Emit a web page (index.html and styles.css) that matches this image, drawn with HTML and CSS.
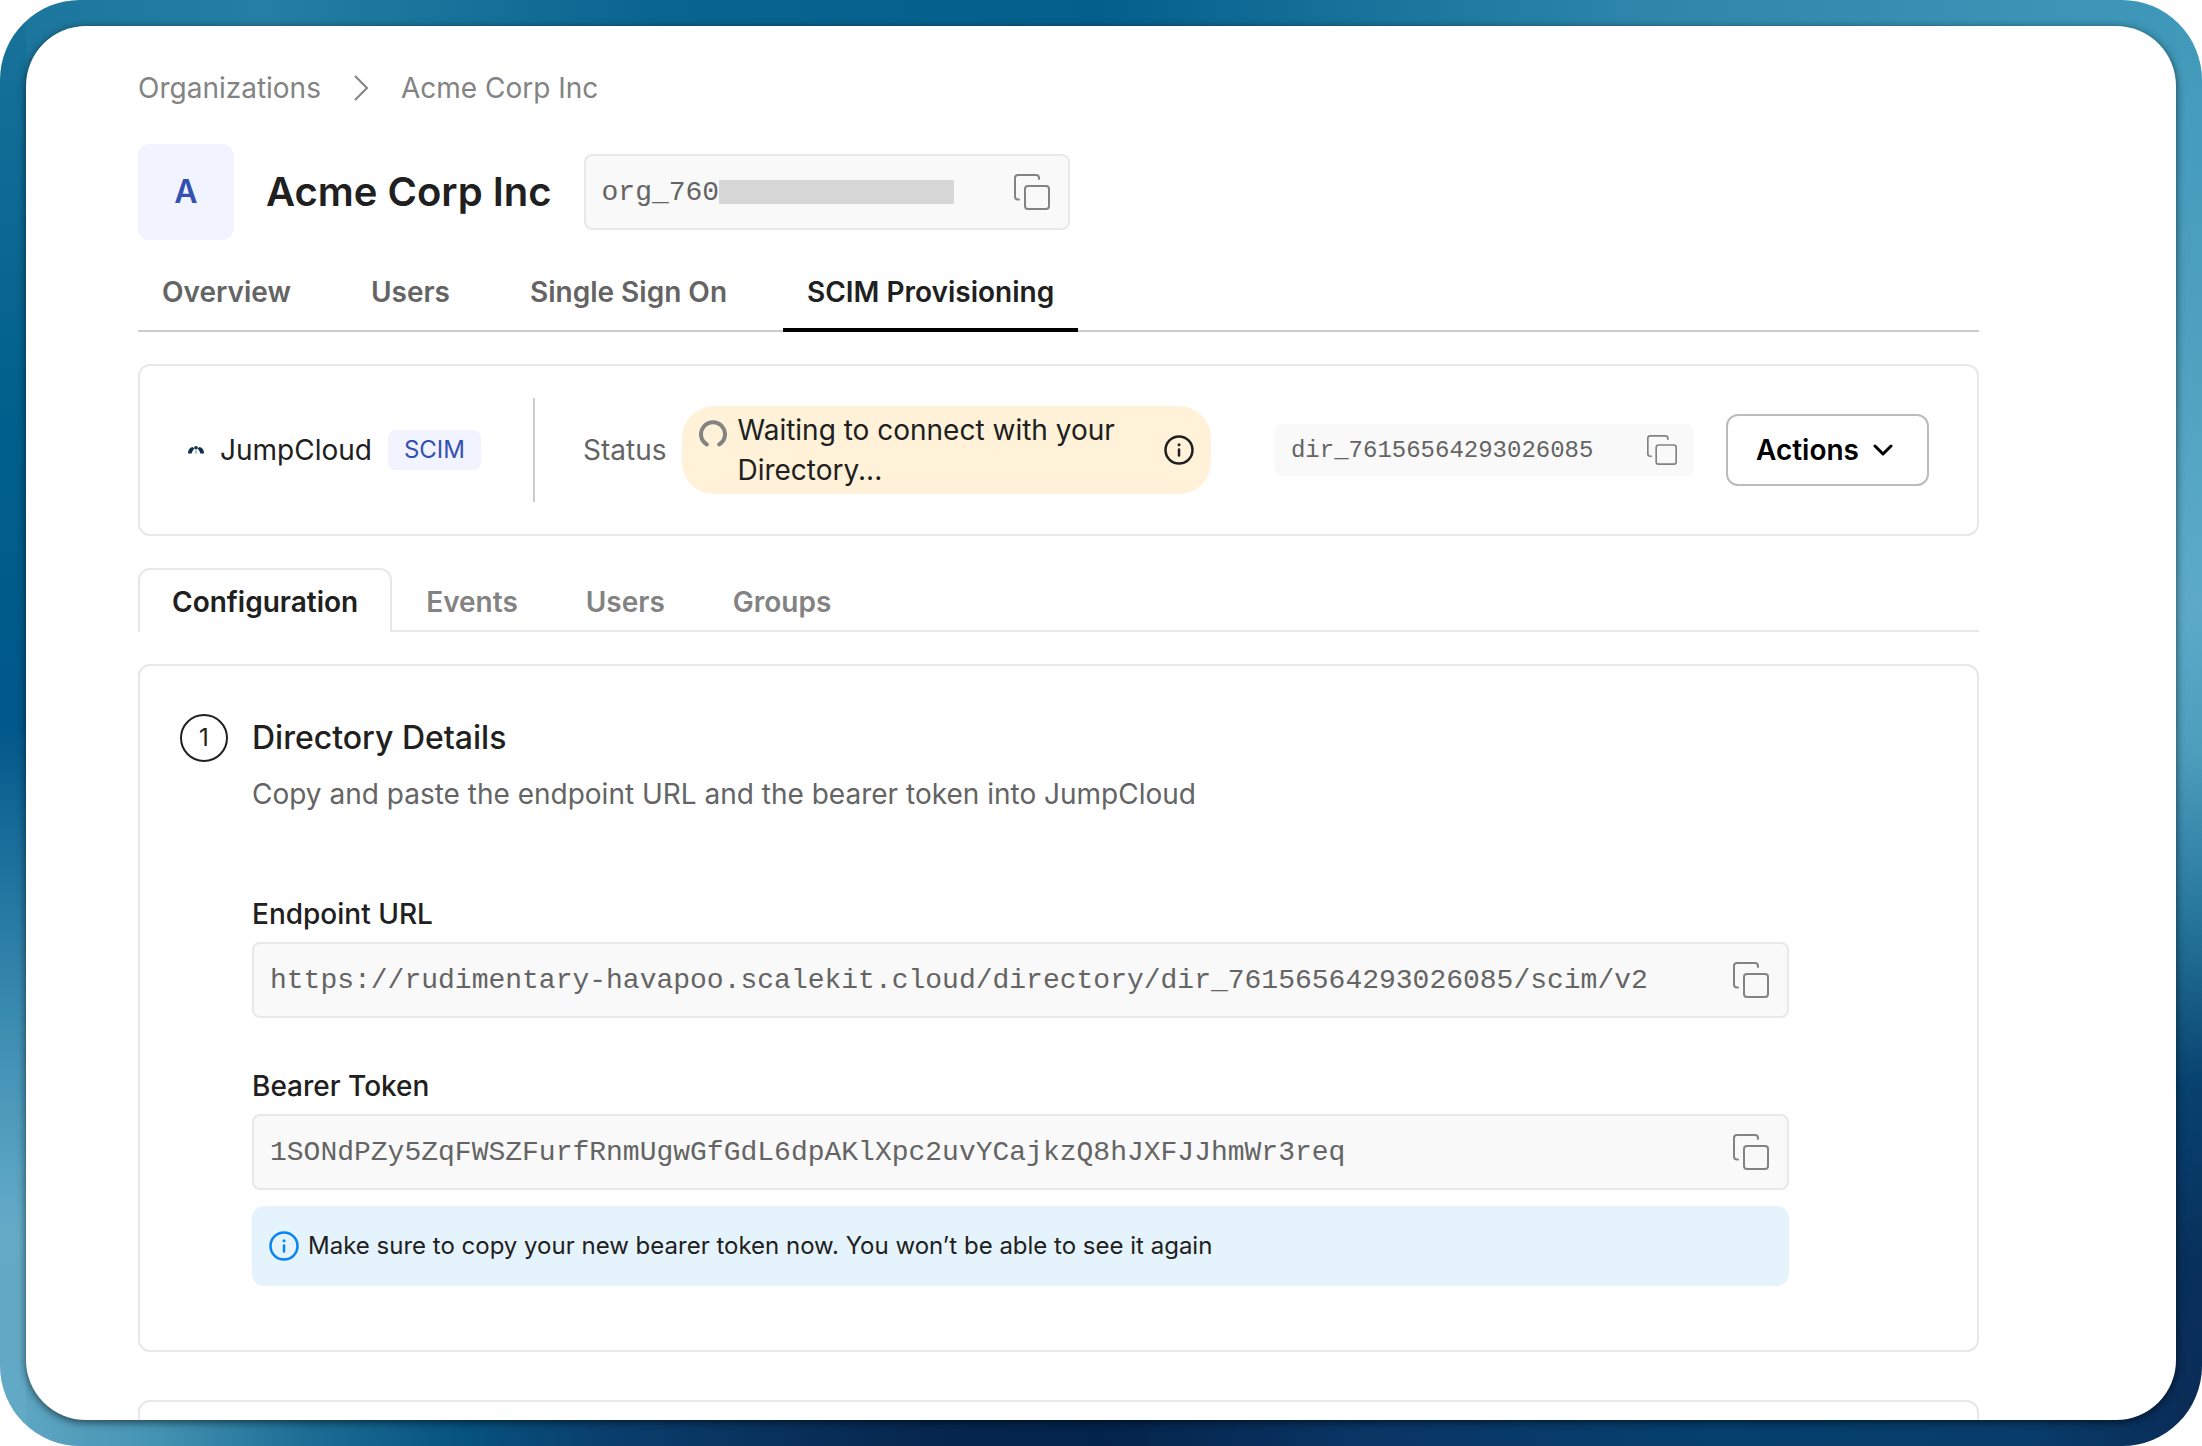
FILE: index.html
```html
<!DOCTYPE html>
<html lang="en">
<head>
<meta charset="utf-8">
<title>Acme Corp Inc – SCIM Provisioning</title>
<link rel="stylesheet" href="styles.css">
</head>
<body>
<svg class="sprite" aria-hidden="true">
  <symbol id="copy" viewBox="0 0 36 36">
    <g fill="none" stroke="currentColor" stroke-width="2" stroke-linecap="round">
      <rect x="11" y="12" width="24" height="23" rx="3"/>
      <path d="M5 25.500H4a3 3 0 0 1-3-3V4a3 3 0 0 1 3-3h18a3 3 0 0 1 3 3v1"/>
    </g>
  </symbol>
  <symbol id="info" viewBox="0 0 30 30">
    <circle cx="15" cy="15" r="13.500" fill="none" stroke="currentColor" stroke-width="2.500"/>
    <path d="M15 14.500v6" stroke="currentColor" stroke-width="2.500" stroke-linecap="round"/>
    <circle cx="15" cy="9.800" r="1.500" fill="currentColor"/>
  </symbol>
</svg>
<div class="backdrop">
  <main class="panel">
    <nav class="breadcrumb" aria-label="Breadcrumb">
      <a href="#">Organizations</a>
      <svg class="crumb-sep" viewBox="0 0 16 28" aria-hidden="true"><path d="M2 2l12 12L2 26" fill="none" stroke="currentColor" stroke-width="2"/></svg>
      <a href="#">Acme Corp Inc</a>
    </nav>

    <header class="org">
      <div class="avatar">A</div>
      <h1>Acme Corp Inc</h1>
      <div class="copy-field org-id">
        <code>org_760</code><span class="redacted"></span>
        <button class="icon-btn" aria-label="Copy organization ID"><svg><use href="#copy"/></svg></button>
      </div>
    </header>

    <nav class="tabs" aria-label="Organization">
      <a href="#">Overview</a>
      <a href="#">Users</a>
      <a href="#">Single Sign On</a>
      <a href="#" class="active" aria-current="page">SCIM Provisioning</a>
    </nav>

    <section class="card connection">
      <div class="provider">
        <svg class="logo" viewBox="0 0 16 8" aria-hidden="true">
          <g fill="#0f2f4f">
            <circle cx="8" cy="1.800" r="1.800"/>
            <path d="M7 7.500V4.500h.700v3zM8.400 7.500V4.500h.700v3z" opacity=".5"/>
            <path d="M0 7.500C0 4 1.500 1.500 4.500 1L6.400 2.500 4.600 5 3.600 7.500zM16 7.500C16 4 14.500 1.500 11.500 1L9.600 2.500 11.400 5l1 2.500z"/>
          </g>
        </svg>
        <span>JumpCloud</span>
        <span class="badge">SCIM</span>
      </div>
      <div class="status">
        <span>Status</span>
        <div class="pill">
          <svg class="spinner" viewBox="0 0 28 28" aria-hidden="true"><path d="M7.800 24.500A12 12 0 1 1 20.200 24.500" fill="none" stroke="currentColor" stroke-width="4" stroke-linecap="round"/></svg>
          <p>Waiting to connect with your Directory...</p>
          <svg class="info"><use href="#info"/></svg>
        </div>
      </div>
      <div class="copy-field small">
        <code>dir_76156564293026085</code>
        <button class="icon-btn" aria-label="Copy directory ID"><svg><use href="#copy"/></svg></button>
      </div>
      <button class="actions">Actions
        <svg viewBox="0 0 20 12" aria-hidden="true"><path d="M2 2l8 8 8-8" fill="none" stroke="currentColor" stroke-width="3" stroke-linecap="round" stroke-linejoin="round"/></svg>
      </button>
    </section>

    <nav class="subtabs" aria-label="Directory">
      <a href="#" class="active" aria-current="page">Configuration</a>
      <a href="#">Events</a>
      <a href="#">Users</a>
      <a href="#">Groups</a>
    </nav>

    <section class="card step">
      <div class="step-number">1</div>
      <div class="step-body">
        <h2>Directory Details</h2>
        <p class="lead">Copy and paste the endpoint URL and the bearer token into JumpCloud</p>
        <label for="endpoint">Endpoint URL</label>
        <div class="copy-field">
          <input id="endpoint" type="text" readonly value="https://rudimentary-havapoo.scalekit.cloud/directory/dir_76156564293026085/scim/v2">
          <button class="icon-btn" aria-label="Copy endpoint URL"><svg><use href="#copy"/></svg></button>
        </div>
        <label for="token">Bearer Token</label>
        <div class="copy-field">
          <input id="token" type="text" readonly value="1SONdPZy5ZqFWSZFurfRnmUgwGfGdL6dpAKlXpc2uvYCajkzQ8hJXFJJhmWr3req">
          <button class="icon-btn" aria-label="Copy bearer token"><svg><use href="#copy"/></svg></button>
        </div>
        <div class="notice">
          <svg class="info"><use href="#info"/></svg>
          <span>Make sure to copy your new bearer token now. You won’t be able to see it again</span>
        </div>
      </div>
    </section>

    <section class="card next-step"></section>
  </main>
</div>
</body>
</html>
```
FILE: styles.css
```css
* { box-sizing: border-box; }
body, h1, h2, p { margin: 0; }
body {
  background: #fff;
  color: #202020;
  font: 400 28px/40px Inter, sans-serif;
}
a { color: inherit; text-decoration: none; }
svg { display: block; flex: none; }
button, input { font: inherit; color: inherit; }
.sprite { position: absolute; width: 0; height: 0; }

.backdrop {
  height: 100vh;
  padding: 26px;
  border-radius: 80px;
  overflow: hidden;
  background:
    linear-gradient(#19739b, #005f8c 30%, #00588a 50%, #3a8bb0 70%, #64abc8 85%, #62a9c6) left / 26px 100% no-repeat,
    linear-gradient(#4099ba, #4c9fbf 20%, #5caac8 42%, #4d9dbd 52%, #28789d 63%, #07426f 75%, #08305c 87%, #0a2b56) right / 26px 100% no-repeat,
    linear-gradient(90deg, #1b759d, #257ea3 12%, #0a6490 30%, #045f8c 50%, #2e87ab 75%, #4099ba) top / 100% 50% no-repeat,
    linear-gradient(90deg, #62a9c6, #4593b3 7%, #1b6d95 14%, #07527f 21%, #0a3d6c 28%, #06264e 42%, #03234a 50%, #0a3565 62%, #05406e 78%, #083c6a 92%, #0a2b56) bottom / 100% 50% no-repeat;
}
.panel {
  display: flex;
  flex-direction: column;
  height: 100%;
  padding: 42px 197px 0 112px;
  overflow: hidden;
  border-radius: 60px;
  background: #fff;
  box-shadow: 0 2px 8px rgba(0, 0, 0, .6);
}
.panel > * { flex: none; }

.breadcrumb {
  display: flex;
  align-items: center;
  gap: 32px;
  color: #838383;
}
.crumb-sep { width: 16px; height: 28px; }

.org {
  display: flex;
  align-items: center;
  gap: 32px;
  margin-top: 36px;
}
.avatar {
  width: 96px;
  border-radius: 12px;
  background: #f1f3ff;
  color: #3451b2;
  font-size: 32px;
  font-weight: 600;
  line-height: 96px;
  text-align: center;
}
h1 { font-size: 40px; font-weight: 600; line-height: 48px; }

.copy-field {
  display: flex;
  align-items: center;
  height: 76px;
  padding: 0 18px 0 16px;
  border: 2px solid #e8e8e8;
  border-radius: 8px;
  background: #f9f9f9;
  color: #646464;
}
.copy-field code, .copy-field input {
  padding: 2px 0 0;
  font-family: "Liberation Mono", monospace;
}
.copy-field input {
  flex: 1;
  min-width: 0;
  height: 40px;
  border: 0;
  background: none;
  outline: none;
}
.icon-btn {
  margin-left: auto;
  padding: 0;
  border: 0;
  background: none;
  color: #838383;
}
.icon-btn svg { width: 36px; height: 36px; }
.org-id { width: 486px; }
.redacted { width: 235px; height: 24px; background: #d7d7d7; }

.tabs {
  display: flex;
  gap: 32px;
  margin-top: 32px;
  box-shadow: inset 0 -2px #ccc;
  color: #646464;
  font-weight: 600;
}
.tabs a { padding: 0 24px 16px; border-bottom: 4px solid transparent; }
.tabs .active { border-color: #000; color: #202020; }

.card { border: 2px solid #e8e8e8; border-radius: 12px; }

.connection {
  display: flex;
  align-items: center;
  margin-top: 32px;
  padding: 32px 48px;
}
.provider {
  display: flex;
  align-items: center;
  height: 104px;
  padding-right: 52px;
  border-right: 2px solid #ccc;
}
.logo { width: 16px; height: 8px; margin-right: 16px; }
.badge {
  margin-left: 16px;
  padding: 0 16px;
  border-radius: 8px;
  background: #f1f3ff;
  color: #3451b2;
  font-size: 24px;
}
.status {
  display: flex;
  flex: 1;
  align-items: center;
  gap: 16px;
  margin: 0 64px 0 48px;
  color: #646464;
}
.pill {
  display: flex;
  flex: 1;
  align-items: center;
  gap: 10px;
  padding: 4px 17px;
  border-radius: 32px;
  background: #fff2d9;
  color: #202020;
}
.pill p { flex: 1; padding-right: 16px; }
.spinner { align-self: flex-start; width: 28px; height: 28px; margin-top: 10px; color: #838383; }
.info { width: 30px; height: 30px; }
.small {
  width: 419px;
  height: 52px;
  padding: 0 17px 0 16px;
  border: 0;
  font-size: 24px;
}
.small .icon-btn svg { width: 30px; height: 30px; }
.actions {
  display: flex;
  align-items: center;
  gap: 14px;
  height: 72px;
  margin-left: 32px;
  padding: 0 34px 0 28px;
  border: 2px solid #bbb;
  border-radius: 12px;
  background: #fff;
  color: #000;
  font-weight: 600;
}
.actions svg { width: 20px; height: 12px; }

.subtabs {
  display: flex;
  margin-top: 32px;
  color: #838383;
  font-weight: 600;
}
.subtabs::after { content: ""; flex: 1; border-bottom: 2px solid #e8e8e8; }
.subtabs a {
  padding: 14px 34px 8px;
  border-bottom: 2px solid #e8e8e8;
}
.subtabs .active {
  padding: 12px 32px 10px;
  border: 2px solid #e8e8e8;
  border-bottom: 0;
  border-radius: 12px 12px 0 0;
  color: #202020;
}

.step {
  display: flex;
  gap: 24px;
  margin-top: 32px;
  padding: 48px 188px 64px 40px;
}
.step-number {
  flex: none;
  width: 48px;
  height: 48px;
  border: 2px solid #202020;
  border-radius: 50%;
  font-size: 24px;
  line-height: 44px;
  text-align: center;
}
.step-body { flex: 1; min-width: 0; }
h2 { font-size: 32px; font-weight: 500; line-height: 48px; }
.lead { margin: 12px 0 80px; color: #646464; }
label { display: block; font-weight: 500; }
.step .copy-field { margin: 8px 0 48px; }
.step .copy-field:has(+ .notice) { margin-bottom: 16px; }
.notice {
  display: flex;
  align-items: center;
  gap: 9px;
  height: 80px;
  padding: 0 17px;
  border-radius: 12px;
  background: #e5f3fd;
  font-size: 24px;
}
.notice .info { color: #0a84f5; }

.next-step { height: 160px; margin-top: 48px; }
```
